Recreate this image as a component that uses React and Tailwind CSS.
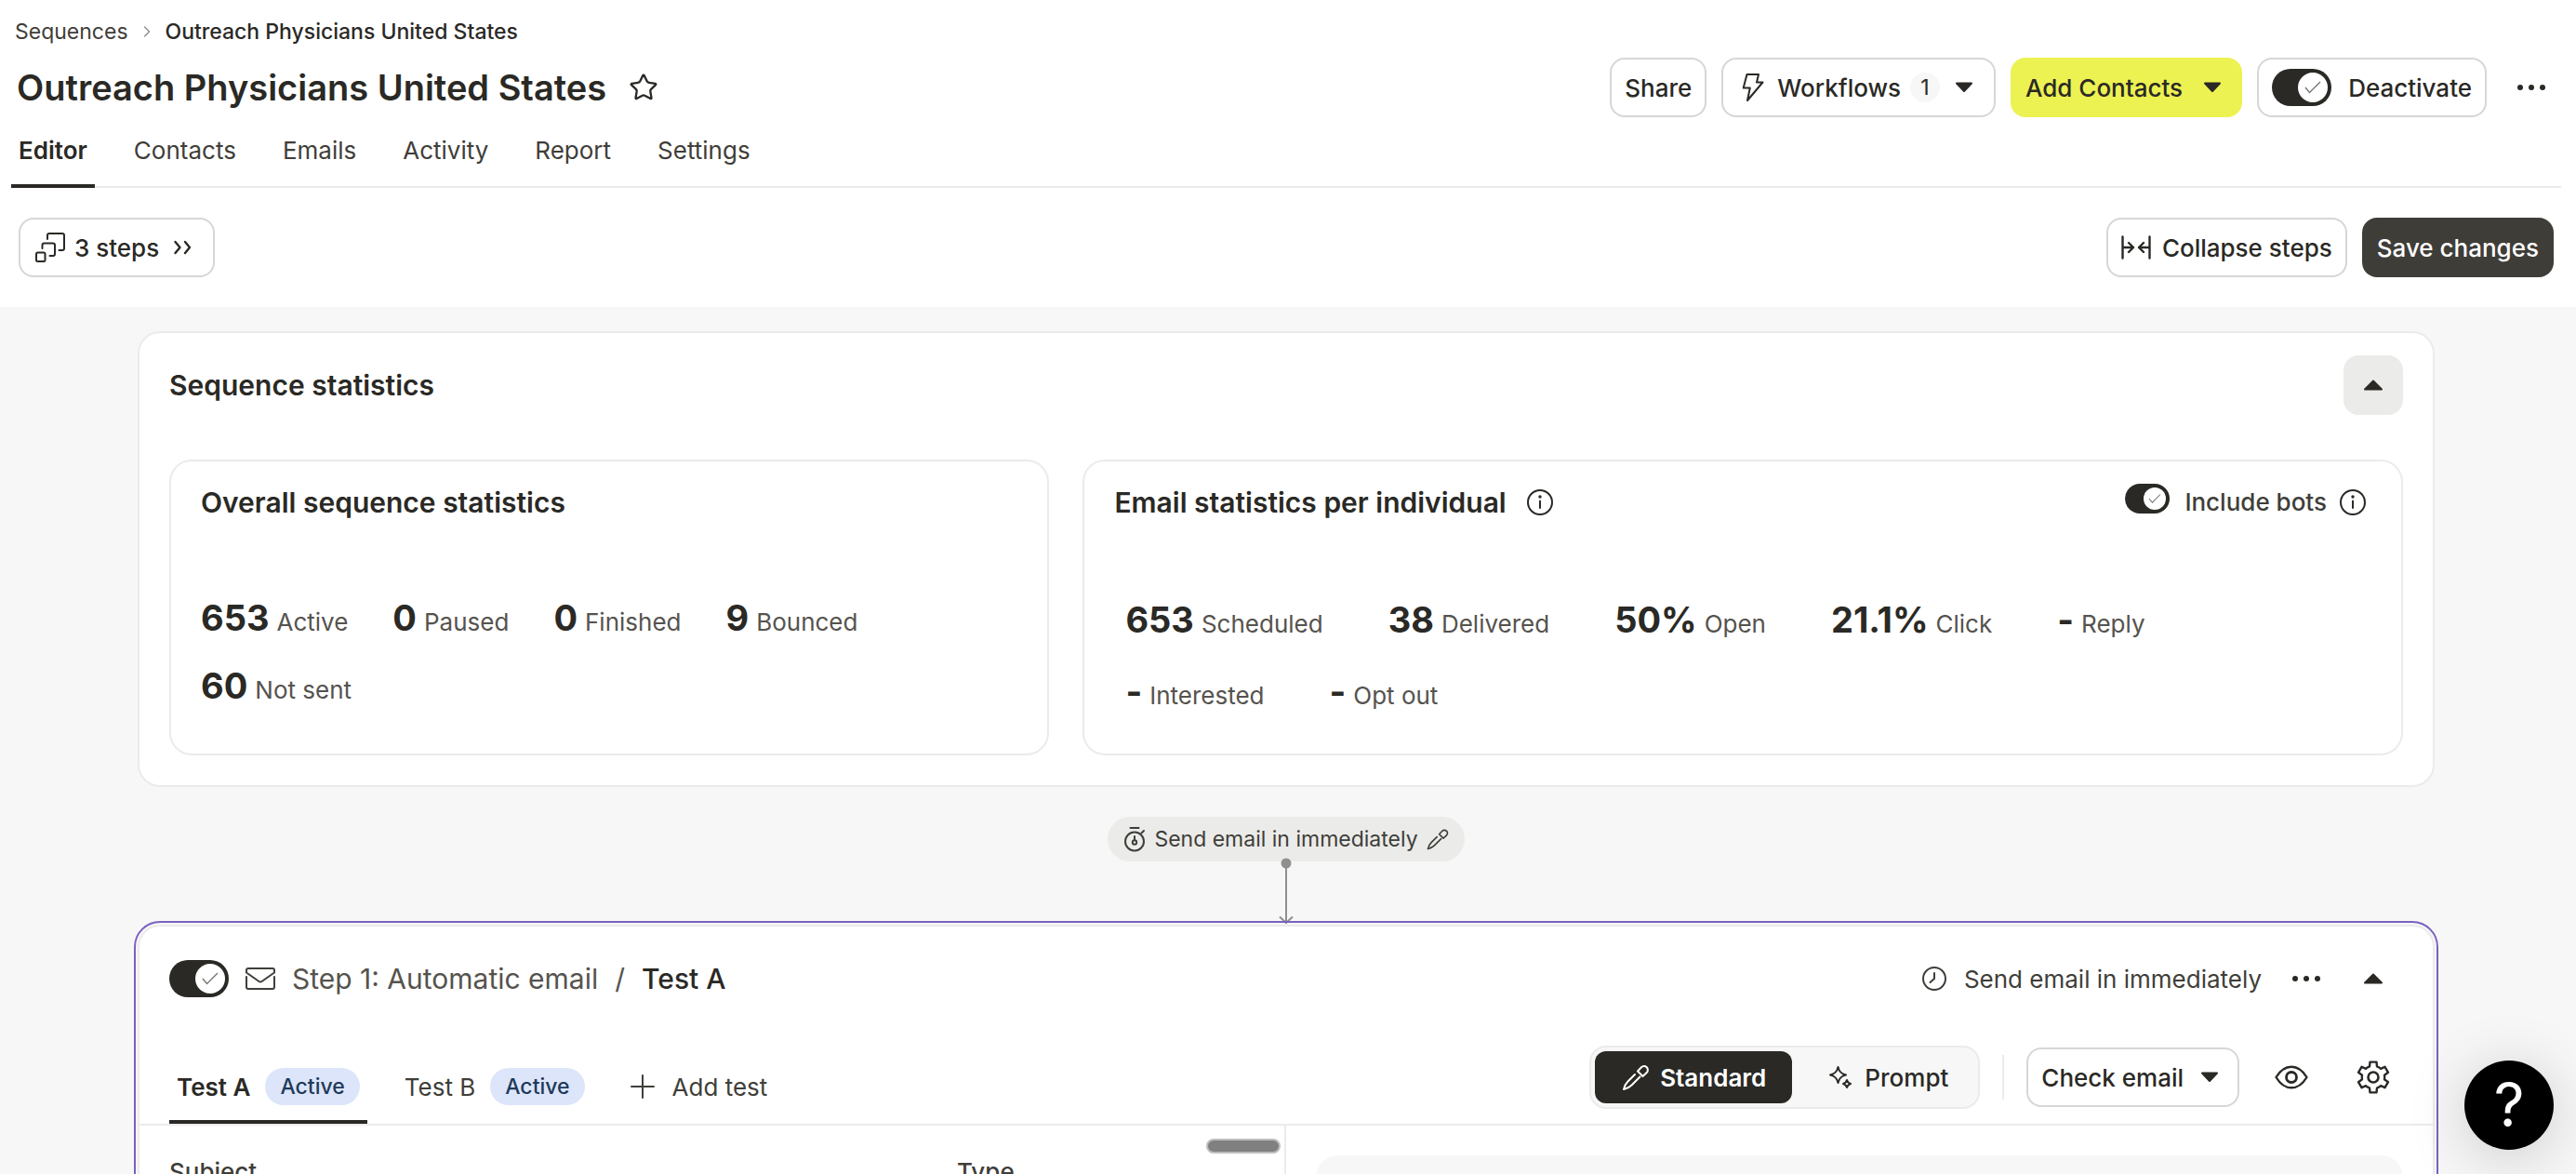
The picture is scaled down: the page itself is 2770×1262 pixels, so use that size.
import { ChevronRight, Star } from "lucide-react";

const OUTLINE_BUTTON = "flex h-16 items-center rounded-2xl border-2 border-[#d6d6d6] bg-white font-medium";
const ICON_BUTTON = "flex size-16 items-center justify-center rounded-2xl";

const NAV_TABS = ["Editor", "Contacts", "Emails", "Activity", "Report", "Settings"];

const OVERALL_STATS = [
  { value: "653", label: "Active" },
  { value: "0", label: "Paused" },
  { value: "0", label: "Finished" },
  { value: "9", label: "Bounced" },
  { value: "60", label: "Not sent" },
];

const EMAIL_STATS = [
  { value: "653", label: "Scheduled" },
  { value: "38", label: "Delivered" },
  { value: "50%", label: "Open" },
  { value: "21.1%", label: "Click" },
  { value: "-", label: "Reply" },
  { value: "-", label: "Interested" },
  { value: "-", label: "Opt out" },
];

function Icon({ box = "0 0 32 32", className = "size-8", children }) {
  return (
    <svg
      viewBox={box}
      className={`shrink-0 ${className}`}
      fill="none"
      stroke="currentColor"
      strokeWidth="2"
      strokeLinecap="round"
      strokeLinejoin="round"
      aria-hidden="true"
    >
      {children}
    </svg>
  );
}

function CaretDown() {
  return (
    <Icon>
      <path d="M8 11.500h16L16 20z" fill="currentColor" />
    </Icon>
  );
}

function CaretUp() {
  return (
    <Icon>
      <path d="M7 20.500h18L16 11.500z" fill="currentColor" />
    </Icon>
  );
}

function DotsIcon() {
  return (
    <Icon>
      <circle cx="4" cy="16" r="3" fill="currentColor" stroke="none" />
      <circle cx="16" cy="16" r="3" fill="currentColor" stroke="none" />
      <circle cx="28" cy="16" r="3" fill="currentColor" stroke="none" />
    </Icon>
  );
}

function BoltIcon() {
  return (
    <Icon>
      <path d="M9.500 2H22l-2 8.500h6.500L10 30l2.800-13.500H5.700z" />
    </Icon>
  );
}

function StepsIcon() {
  return (
    <Icon>
      <rect x="1" y="21.500" width="9.500" height="9.500" rx="1.500" />
      <path d="M7.500 17v-3.500a2 2 0 0 1 2-2H19a2 2 0 0 1 2 2V23a2 2 0 0 1-2 2h-3.500" />
      <path d="M13 7V3a2 2 0 0 1 2-2h14a2 2 0 0 1 2 2v14a2 2 0 0 1-2 2h-3.500" />
    </Icon>
  );
}

function DoubleChevron() {
  return (
    <Icon>
      <path d="m7.500 10 5 6-5 6M18 10l5 6-5 6" strokeWidth="2.400" />
    </Icon>
  );
}

function CollapseIcon() {
  return (
    <Icon>
      <path d="M1.500 4.500v23M30.500 4.500v23M1.500 16H13M8 11l5 5-5 5M30.500 16H19M24 11l-5 5 5 5" strokeWidth="2.400" />
    </Icon>
  );
}

function InfoIcon() {
  return (
    <Icon>
      <circle cx="16" cy="16" r="13" />
      <path d="M16 14.500v7.500" />
      <circle cx="16" cy="10" r="1.700" fill="currentColor" stroke="none" />
    </Icon>
  );
}

function TimerIcon() {
  return (
    <Icon box="0 0 26 28" className="h-7 w-[26px]">
      <circle cx="13" cy="16.500" r="10" />
      <circle cx="13" cy="17.500" r="2.200" />
      <path d="M13 15v-4M8.500 2h9M20.500 7.500 23 5" />
    </Icon>
  );
}

function PencilIcon({ className = "size-8" }) {
  return (
    <Icon className={className}>
      <path d="M15 13 7.500 20.500C5.500 22.500 3.700 25.500 3 29c3.500-.7 6.500-2.500 8.500-4.500L20.500 15.500" />
      <path d="m18 9.500 4-4.200a4 4 0 0 1 5.700 0 4 4 0 0 1 0 5.700L23.500 15z" />
    </Icon>
  );
}

function SparkleIcon() {
  return (
    <Icon>
      <path d="M13.500 5c1.200 5.200 3.300 7.300 8.500 8.500-5.200 1.200-7.300 3.300-8.500 8.500-1.200-5.200-3.300-7.300-8.500-8.500 5.200-1.200 7.300-3.300 8.500-8.500z" />
      <path d="M23 19c.7 2.400 1.600 3.300 4 4-2.400.7-3.300 1.600-4 4-.7-2.400-1.600-3.300-4-4 2.400-.7 3.300-1.600 4-4z" />
    </Icon>
  );
}

function MailIcon() {
  return (
    <Icon className="size-8 text-[#3f3e39]">
      <path d="M3 5h26a2 2 0 0 1 2 2v2.500L17.500 19a2.500 2.500 0 0 1-3 0L1 9.500V7a2 2 0 0 1 2-2z" />
      <path d="M1 14v11a2 2 0 0 0 2 2h26a2 2 0 0 0 2-2V14" />
    </Icon>
  );
}

function ClockIcon() {
  return (
    <Icon>
      <circle cx="16" cy="16" r="12" />
      <path d="M16 10v6l-4.500 4" />
    </Icon>
  );
}

function PlusIcon() {
  return (
    <Icon>
      <path d="M16 4v24M4 16h24" />
    </Icon>
  );
}

function EyeIcon() {
  return (
    <Icon box="0 0 40 40" className="size-10">
      <path d="M3.500 20C8 12.500 13.500 8.700 20 8.700S32 12.500 36.500 20C32 27.500 26.500 31.300 20 31.300S8 27.500 3.500 20z" strokeWidth="2.400" />
      <circle cx="20" cy="20" r="5.500" strokeWidth="2.800" />
    </Icon>
  );
}

// Six teeth, one every 60 degrees: valley, shoulder, tooth top, shoulder
const GEAR_POINTS = [0, 60, 120, 180, 240, 300]
  .flatMap((tooth) => [
    [tooth - 30, 12.2],
    [tooth - 19, 12.2],
    [tooth - 12, 16.8],
    [tooth + 12, 16.8],
    [tooth + 19, 12.2],
  ])
  .map(([angle, radius]) => {
    const rad = (angle * Math.PI) / 180;
    return `${(20 + radius * Math.sin(rad)).toFixed(1)},${(20 - radius * Math.cos(rad)).toFixed(1)}`;
  })
  .join(" ");

function GearIcon() {
  return (
    <Icon box="0 0 40 40" className="size-10">
      <polygon points={GEAR_POINTS} strokeWidth="2.400" />
      <circle cx="20" cy="20" r="5.500" strokeWidth="2.600" />
    </Icon>
  );
}

function Toggle({ id, label, small = false }) {
  return (
    <span className="grid shrink-0 items-center">
      <input
        id={id}
        type="checkbox"
        defaultChecked
        aria-label={label}
        className={`col-start-1 row-start-1 appearance-none rounded-full bg-[#d6d6d6] checked:bg-[#2a2925] ${small ? "h-8 w-12" : "h-10 w-16"}`}
      />
      <span
        className={`pointer-events-none col-start-1 row-start-1 mr-1 justify-self-end rounded-full bg-white ${small ? "size-6" : "size-8"}`}
      >
        <svg viewBox="0 0 32 32" className="size-full" fill="none" stroke="#77756f" strokeWidth="1.4" aria-hidden="true">
          <path d="m8 16 4.500 5.500L24 10" />
        </svg>
      </span>
    </span>
  );
}

function StatList({ stats, className }) {
  return (
    <ul className={`flex flex-wrap ${className}`}>
      {stats.map((stat) => (
        <li key={stat.label} className="flex items-baseline gap-2 leading-[48px]">
          <span className="text-[38px] font-bold">{stat.value}</span>
          <span className="text-[#55534e]">{stat.label}</span>
        </li>
      ))}
    </ul>
  );
}

function Header() {
  return (
    <header className="bg-white pb-8 pt-[18px]">
      <nav aria-label="Breadcrumb" className="flex h-8 items-center gap-2 pl-4 text-[23px]">
        <a href="#sequences" className="text-[#3f3e39]">
          Sequences
        </a>
        <ChevronRight className="mx-[2px] size-5 text-[#8b8a86]" strokeWidth={1.5} />
        <span className="font-medium">Outreach Physicians United States</span>
      </nav>

      <div className="mt-3 flex items-center justify-between pl-[18px] pr-4">
        <div className="flex items-center gap-6">
          <h1 className="text-[38px] font-semibold leading-[48px]">Outreach Physicians United States</h1>
          <button type="button" aria-label="Add to favorites">
            <Star className="size-8" strokeWidth={1.75} />
          </button>
        </div>
        <div className="flex items-center gap-4">
          <button type="button" className={`${OUTLINE_BUTTON} px-[14px]`}>
            Share
          </button>
          <button type="button" className={`${OUTLINE_BUTTON} gap-[10px] px-4`}>
            <BoltIcon />
            Workflows
            <span className="flex size-8 items-center justify-center rounded-full bg-[#f7f7f7] text-[23px] font-normal">1</span>
            <CaretDown />
          </button>
          <button type="button" className="flex h-16 items-center gap-4 rounded-2xl bg-[#ecf252] px-4 font-medium">
            Add Contacts
            <CaretDown />
          </button>
          <label className={`${OUTLINE_BUTTON} gap-[18px] px-[14px]`}>
            <Toggle id="sequence-active" />
            Deactivate
          </label>
          <button type="button" aria-label="More actions" className={ICON_BUTTON}>
            <DotsIcon />
          </button>
        </div>
      </div>

      <nav aria-label="Sequence" className="ml-3 mr-4 flex gap-[34px] border-b-2 border-[#ebebeb]">
        {NAV_TABS.map((tab) => (
          <a
            key={tab}
            href={`#${tab.toLowerCase()}`}
            className={`-mb-[2px] border-b-4 px-2 py-4 leading-10 ${
              tab === "Editor" ? "border-[#2a2925] font-semibold" : "border-transparent text-[#3f3e39]"
            }`}
          >
            {tab}
          </a>
        ))}
      </nav>

      <div className="mt-8 flex items-center justify-between pl-5 pr-6">
        <button type="button" className={`${OUTLINE_BUTTON} gap-[10px] px-4`}>
          <StepsIcon />
          3 steps
          <DoubleChevron />
        </button>
        <div className="flex gap-4">
          <button type="button" className={`${OUTLINE_BUTTON} gap-3 px-[14px]`}>
            <CollapseIcon />
            Collapse steps
          </button>
          <button type="button" className="h-16 rounded-2xl bg-[#3f3d38] px-4 font-medium text-white">
            Save changes
          </button>
        </div>
      </div>
    </header>
  );
}

function StatisticsCard() {
  return (
    <section className="rounded-3xl border-2 border-[#ebebeb] bg-white px-8 pb-8 pt-6">
      <div className="flex items-center justify-between">
        <h2 className="text-[30px] font-semibold leading-10">Sequence statistics</h2>
        <button type="button" aria-label="Collapse statistics" className={`${ICON_BUTTON} bg-[#ebebe9]`}>
          <CaretUp />
        </button>
      </div>

      <div className="mt-12 grid grid-cols-[2fr_3fr] gap-9">
        <section className="rounded-3xl border-2 border-[#ebebeb] px-8 pb-9 pt-6">
          <h3 className="text-[30px] font-semibold leading-10">Overall sequence statistics</h3>
          <StatList stats={OVERALL_STATS} className="mt-20 gap-x-12 gap-y-5" />
        </section>

        <section className="rounded-3xl border-2 border-[#ebebeb] px-8 pb-[38px] pt-6">
          <div className="flex items-start justify-between">
            <div className="flex items-center gap-5">
              <h3 className="text-[30px] font-semibold leading-10">Email statistics per individual</h3>
              <InfoIcon />
            </div>
            <div className="flex items-start gap-4">
              <Toggle id="include-bots" small />
              <label htmlFor="include-bots" className="flex items-center gap-3 font-medium leading-10 text-[#3f3e39]">
                Include bots
                <span className="mr-1 text-[#2a2925]">
                  <InfoIcon />
                </span>
              </label>
            </div>
          </div>
          <StatList stats={EMAIL_STATS} className="mt-[82px] gap-x-[70px] gap-y-6 pl-3 pr-20" />
        </section>
      </div>
    </section>
  );
}

function DelayConnector() {
  return (
    <div className="mt-8 flex flex-col items-center">
      <button type="button" className="flex h-12 items-center gap-2 rounded-full bg-[#ebebe9] px-4 text-[23px] text-[#3f3e39]">
        <TimerIcon />
        Send email in immediately
        <PencilIcon className="size-[26px]" />
      </button>
      <svg viewBox="0 0 20 68" className="h-[68px] w-5 overflow-visible text-[#8f8f8f]" fill="none" stroke="currentColor" strokeWidth="2" aria-hidden="true">
        <circle cx="10" cy="2" r="5.500" fill="currentColor" stroke="none" />
        <path d="M10 2v65M3 59.500l7 6.500 7-6.500" />
      </svg>
    </div>
  );
}

function StatusPill() {
  return (
    <span className="flex h-10 items-center rounded-full bg-[#dce5fa] px-4 text-[23px] font-medium text-[#1f3a5a]">Active</span>
  );
}

function StepCard() {
  return (
    <section className="flex grow flex-col rounded-3xl border-2 border-[#ebebeb] bg-white pt-6 outline-2 outline-offset-2 outline-[#7b61c0]">
      <div className="flex items-center justify-between px-8">
        <div className="flex items-center gap-[18px] text-[30px] leading-10 text-[#55534e]">
          <Toggle id="step-active" label="Step 1 active" />
          <MailIcon />
          <span>Step 1: Automatic email</span>
          <span>/</span>
          <span className="font-medium text-[#2a2925]">Test A</span>
        </div>
        <div className="flex items-center gap-2">
          <div className="mr-2 flex items-center gap-4 text-[#3f3e39]">
            <ClockIcon />
            Send email in immediately
          </div>
          <button type="button" aria-label="Step options" className={ICON_BUTTON}>
            <DotsIcon />
          </button>
          <button type="button" aria-label="Collapse step" className={ICON_BUTTON}>
            <CaretUp />
          </button>
        </div>
      </div>

      <div className="mt-10 flex items-end justify-between border-b-2 border-[#ebebeb] px-8">
        <div className="flex gap-8">
          <button type="button" className="flex items-center gap-4 border-b-4 border-[#2a2925] px-2 pb-4 font-semibold">
            Test A
            <StatusPill />
          </button>
          <button type="button" className="flex items-center gap-4 border-b-4 border-transparent px-2 pb-4 text-[#3f3e39]">
            Test B
            <StatusPill />
          </button>
          <button type="button" className="flex items-center gap-4 border-b-4 border-transparent px-[6px] pb-4 text-[#3f3e39]">
            <PlusIcon />
            Add test
          </button>
        </div>

        <div className="mb-4 flex items-center gap-6 font-medium">
          <div className="flex gap-2 rounded-[18px] border-2 border-[#ebebeb] bg-[#f7f7f7] p-1">
            <button type="button" aria-pressed="true" className="flex h-14 items-center gap-[10px] rounded-xl bg-[#2a2925] px-7 font-semibold text-white">
              <PencilIcon />
              Standard
            </button>
            <button type="button" aria-pressed="false" className="flex h-14 items-center gap-[10px] rounded-xl px-7">
              <SparkleIcon />
              Prompt
            </button>
          </div>
          <div className="h-12 w-[2px] bg-[#ebebeb]" />
          <button type="button" className={`${OUTLINE_BUTTON} gap-3 px-[14px]`}>
            Check email
            <CaretDown />
          </button>
          <button type="button" aria-label="Preview" className={ICON_BUTTON}>
            <EyeIcon />
          </button>
          <button type="button" aria-label="Settings" className={ICON_BUTTON}>
            <GearIcon />
          </button>
        </div>
      </div>

      <div className="grid grow grid-cols-2">
        <div className="relative flex gap-6 border-r-2 border-[#ebebeb] px-8 pt-[34px] font-medium leading-8 text-[#3f3e39]">
          <div className="grow">
            <label htmlFor="subject">Subject</label>
            <input id="subject" className="mt-2 block h-16 w-full rounded-2xl border-2 border-[#d6d6d6] px-4" />
          </div>
          <div className="w-[320px]">
            <label htmlFor="type">Type</label>
            <select id="type" className="mt-2 block h-16 w-full rounded-2xl border-2 border-[#d6d6d6] px-4" />
          </div>
          <div className="absolute right-1 top-[14px] h-4 w-20 rounded-full border-2 border-[#bdbdbd] bg-[#808080]" />
        </div>
        <div className="px-8 pt-8">
          <div className="h-40 rounded-3xl bg-[#f7f7f7]" />
        </div>
      </div>
    </section>
  );
}

export default function App() {
  return (
    <div className="flex h-screen flex-col overflow-hidden bg-[#f7f7f7] font-['Inter','Liberation_Sans',sans-serif] text-[26px] text-[#2a2925]">
      <Header />
      <main className="flex grow flex-col pl-[148px] pr-[152px] pt-[26px]">
        <StatisticsCard />
        <DelayConnector />
        <StepCard />
      </main>
      <button
        type="button"
        aria-label="Help"
        className="fixed bottom-[26px] right-6 flex size-24 items-center justify-center rounded-full bg-black text-[64px] text-white shadow-[0_8px_64px_rgba(0,0,0,0.18)]"
      >
        ?
      </button>
    </div>
  );
}
